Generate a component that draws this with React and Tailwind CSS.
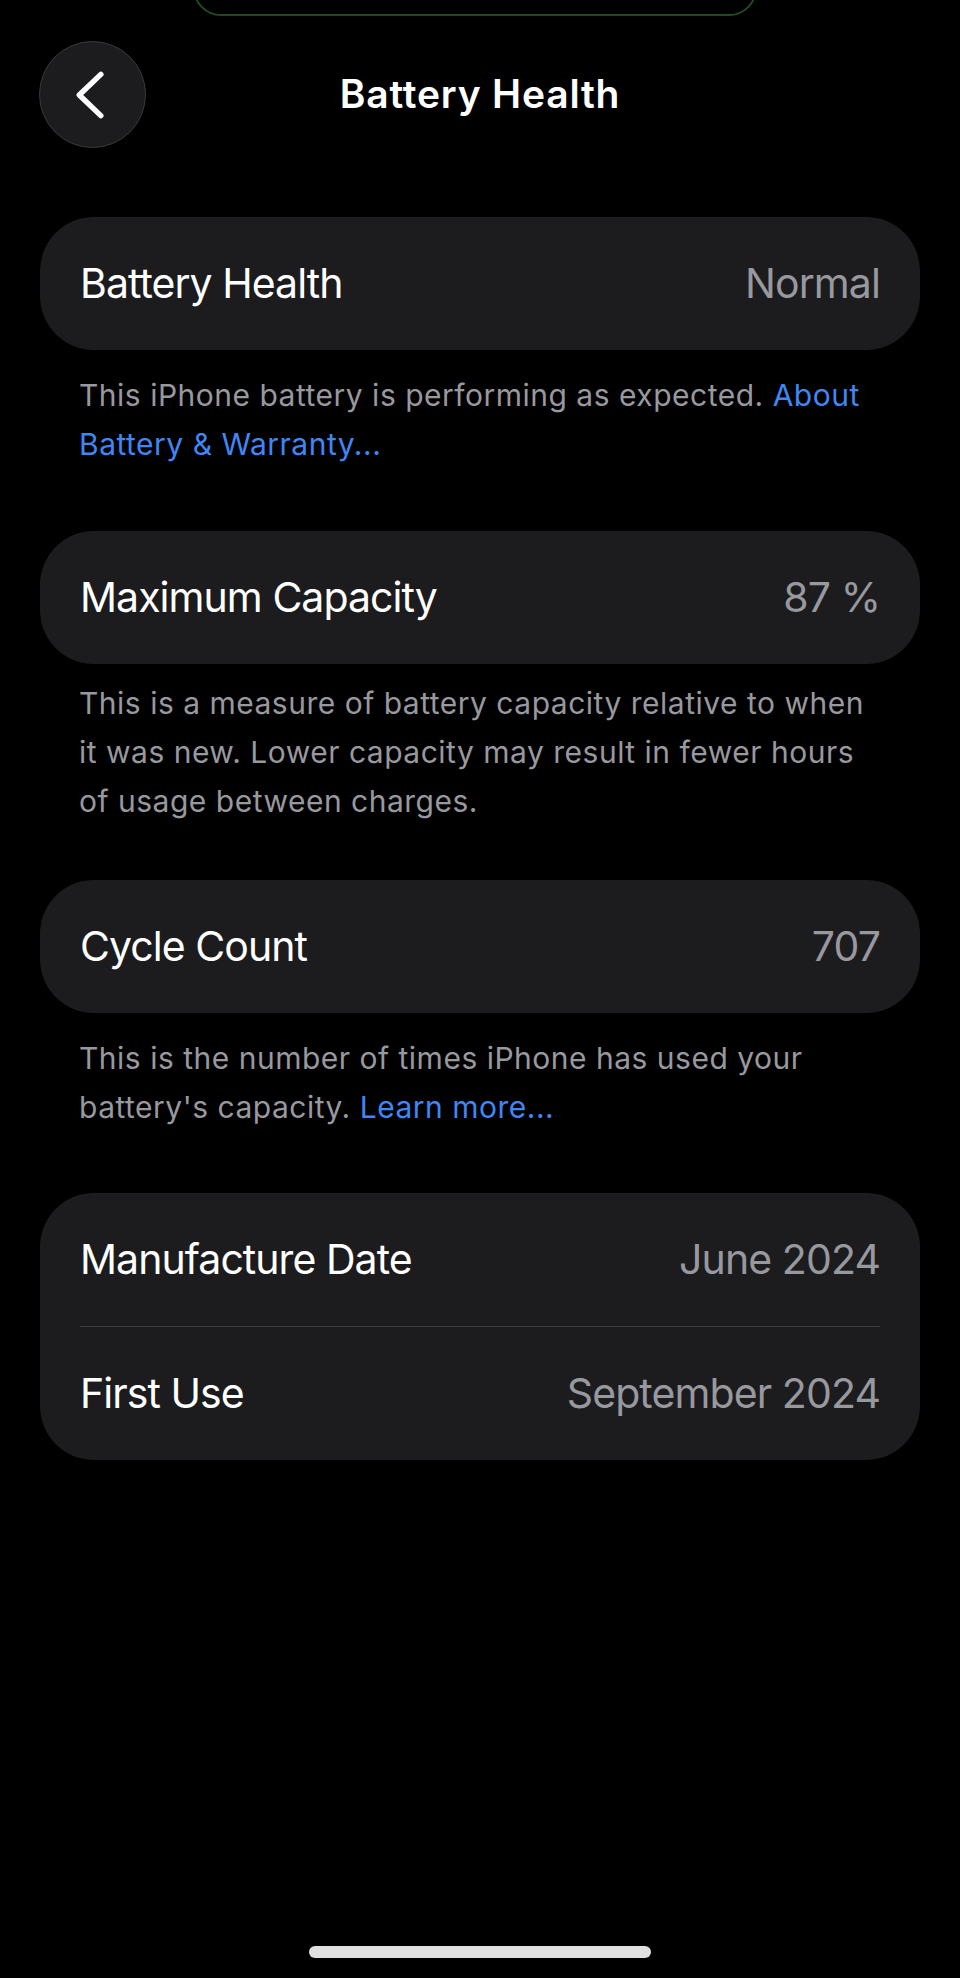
const FONT = { fontFamily: 'Inter, "Noto Sans", sans-serif' };

function BackButton() {
  return (
    <button className="w-[107px] h-[107px] rounded-full bg-[#1c1c1e] border border-[#3a3a3c] flex items-center justify-center shrink-0">
      <svg width="107" height="107" viewBox="0 0 107 107" fill="none">
        <path d="M62 33 L40 54 L62 75" stroke="#ffffff" strokeWidth="5.5" strokeLinecap="round" strokeLinejoin="round" />
      </svg>
    </button>
  );
}

function Row({ label, value }) {
  return (
    <div className="h-[133px] flex items-center justify-between">
      <span className="text-[41px] text-white tracking-[-0.95px]">{label}</span>
      <span className="text-[41px] text-[#98989f] tracking-[-0.9px]">{value}</span>
    </div>
  );
}

function Card({ children }) {
  return <div className="mx-[40px] bg-[#1c1c1e] rounded-[54px] px-[40px]">{children}</div>;
}

function Footer({ className, children }) {
  return (
    <p className={`px-[79px] text-[30px] leading-[49px] text-[#98989f] tracking-[0.5px] ${className}`}>
      {children}
    </p>
  );
}

export default function App() {
  return (
    <div className="relative w-full h-[1978px] bg-black flex flex-col overflow-hidden" style={FONT}>
      {/* edge of the sheet peeking in from the top */}
      <div className="absolute left-[193px] top-[-40px] w-[564px] h-[56px] rounded-[36px] border-2 border-[#1f4a22]" />

      {/* Nav bar */}
      <div className="flex items-center px-[39px] pt-[41px]">
        <BackButton />
        <h1 className="flex-1 text-center text-white text-[39px] font-semibold tracking-[0.8px]">Battery Health</h1>
        <div className="w-[107px] shrink-0" />
      </div>

      <div className="mt-[69px]">
        <Card>
          <Row label="Battery Health" value="Normal" />
        </Card>
        <Footer className="mt-[21px]">
          This iPhone battery is performing as expected.{' '}
          <span className="text-[#3f87f5]">About Battery &amp; Warranty...</span>
        </Footer>
      </div>

      <div className="mt-[62px]">
        <Card>
          <Row label="Maximum Capacity" value="87 %" />
        </Card>
        <Footer className="mt-[15px]">
          This is a measure of battery capacity relative to when it was new. Lower capacity may result in fewer hours
          of usage between charges.
        </Footer>
      </div>

      <div className="mt-[54px]">
        <Card>
          <Row label="Cycle Count" value="707" />
        </Card>
        <Footer className="mt-[21px]">
          This is the number of times iPhone has used your battery's capacity.{' '}
          <span className="text-[#3f87f5]">Learn more...</span>
        </Footer>
      </div>

      <div className="mt-[61px]">
        <Card>
          <Row label="Manufacture Date" value="June 2024" />
          <div className="h-px bg-[#3d3c41]" />
          <Row label="First Use" value="September 2024" />
        </Card>
      </div>

      {/* Home indicator */}
      <div className="mt-auto mb-[20px] flex justify-center">
        <div className="w-[342px] h-[12px] rounded-full bg-[#e0e0e0]" />
      </div>
    </div>
  );
}
